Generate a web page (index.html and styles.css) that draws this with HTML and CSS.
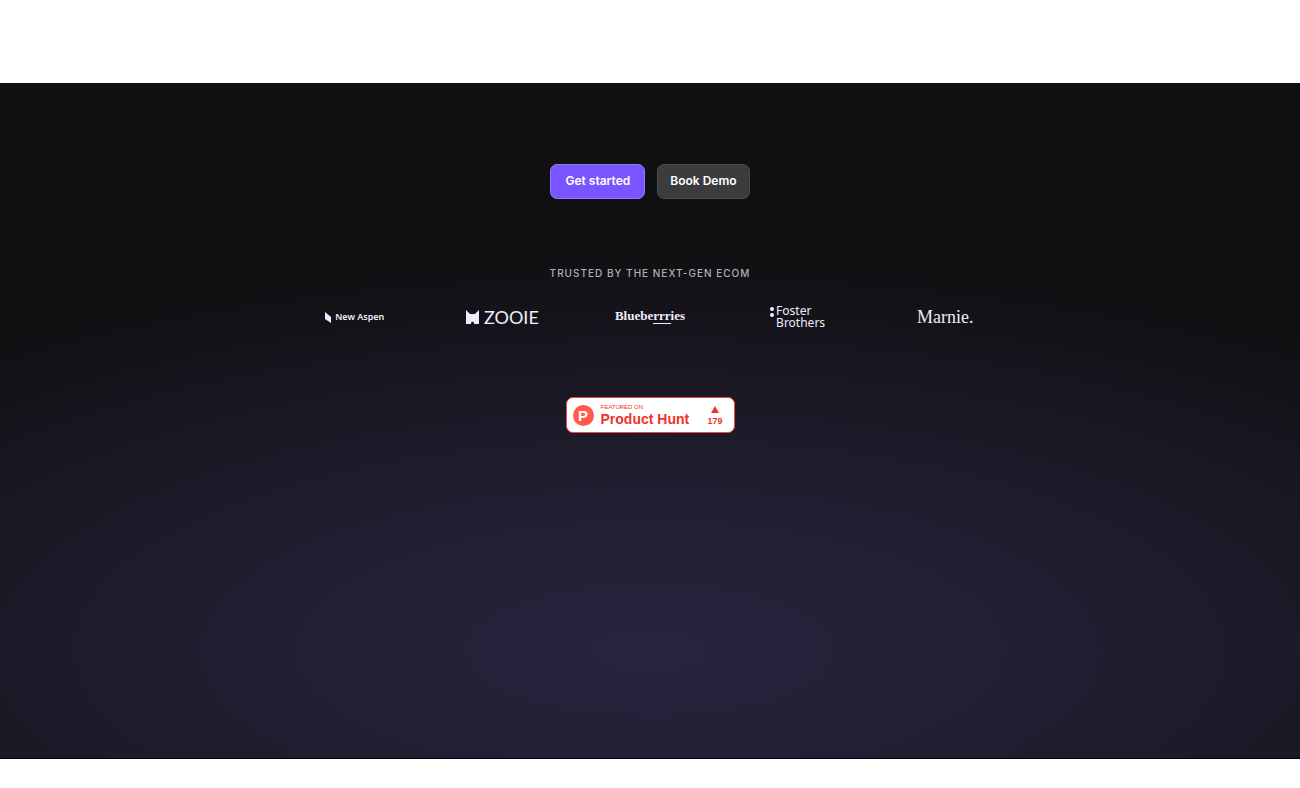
FILE: index.html
```
<!DOCTYPE html>
<html lang="en">
<head>
    <meta charset="UTF-8">
    <meta name="viewport" content="width=device-width, initial-scale=1.0">
    <title>Get started</title>
    <link rel="stylesheet" href="styles.css">
</head>
<body>
  <main class="hero">
    <div class="actions">
      <button type="button" class="btn btn-primary">Get started</button>
      <button type="button" class="btn btn-dark">Book Demo</button>
    </div>

    <h2 class="trusted">Trusted by the next-gen ecom</h2>

    <ul class="logos">
      <li class="logo aspen">
        <svg width="6" height="11" viewBox="0 0 6 11"><path d="M0 0L6 5V11L0 7Z" fill="currentColor"/></svg>
        <span>New Aspen</span>
      </li>
      <li class="logo zooie">
        <svg width="13" height="14" viewBox="0 0 13 14"><path d="M0 0L4 4H9L13 0V14H8V12.500Q6.500 11 5 12.500V14H0Z" fill="currentColor"/></svg>
        <span>ZOOIE</span>
      </li>
      <li class="logo blueberries"><span>Bluebe<span class="underlined">rrr</span>ies</span></li>
      <li class="logo foster">
        <svg width="4" height="13" viewBox="0 0 4 13"><circle cx="2" cy="4" r="2" fill="currentColor"/><circle cx="2" cy="10" r="2" fill="currentColor"/></svg>
        <span>Foster<br>Brothers</span>
      </li>
      <li class="logo marnie">Marnie.</li>
    </ul>

    <a href="#" class="product-hunt">
      <span class="ph-mark">P</span>
      <span class="ph-text">
        <span class="ph-small">FEATURED ON</span>
        <span class="ph-name">Product Hunt</span>
      </span>
      <span class="ph-votes">
        <svg width="8" height="7" viewBox="0 0 8 7"><path d="M4 0L8 7H0Z" fill="currentColor"/></svg>
        <span>179</span>
      </span>
    </a>
  </main>
</body>
</html>
```
FILE: styles.css
```
* {
    box-sizing: border-box;
}

body {
    margin: 0;
    padding: 83px 0 29px;
    background: #fff;
    font-family: Inter, "Liberation Sans", sans-serif;
}

.hero {
    display: flex;
    flex-direction: column;
    align-items: center;
    padding: 81px 20px 325px;
    border-bottom: 1px solid #000;
    background: radial-gradient(ellipse 1100px 400px at 50% 84%, #29233f 0%, #221e32 36%, #1a1824 66%, #100f11 100%);
}

.actions {
    display: flex;
    gap: 12px;
}

.btn {
    height: 35px;
    padding: 0 14px 2px;
    border-radius: 7px;
    color: #fff;
    font-family: inherit;
    font-size: 12px;
    font-weight: 600;
    cursor: pointer;
}

.btn-primary {
    border: 1px solid #957aff;
    background: #7855ff;
}

.btn-dark {
    padding: 0 12px 2px;
    border: 1px solid #4b4b4d;
    background: #3c3c3e;
}

.trusted {
    margin: 68px 0 0;
    color: #b3aeba;
    font-size: 10px;
    font-weight: 500;
    line-height: 12px;
    letter-spacing: 1px;
    text-transform: uppercase;
}

.logos {
    display: grid;
    grid-template-columns: repeat(5, 1fr);
    align-items: center;
    justify-items: center;
    width: 100%;
    max-width: 738px;
    height: 36px;
    margin: 20px 0 0;
    padding: 0;
    list-style: none;
    color: #f0edfa;
}

.logo {
    display: flex;
    align-items: center;
    white-space: nowrap;
}

.aspen {
    gap: 4px;
    font: 600 9px/12px "Noto Sans", sans-serif;
}

.zooie {
    gap: 5px;
    font: 400 18px/20px Lato, sans-serif;
}

.blueberries {
    padding-bottom: 2px;
    font: 700 13px/14px "Liberation Serif", serif;
}

.underlined {
    border-bottom: 1px solid currentColor;
}

.foster {
    align-items: flex-start;
    gap: 2px;
    font: 400 12px/12px "Noto Sans", sans-serif;
}

.marnie {
    font: 400 18px/20px "Liberation Serif", serif;
}

.product-hunt {
    display: flex;
    align-items: center;
    width: 169px;
    height: 36px;
    margin-top: 62px;
    padding: 1px 11px 0 6px;
    border: 1px solid #f0483e;
    border-radius: 7px;
    background: #fff;
    color: #f0322b;
    font-family: "Liberation Sans", Arial, sans-serif;
    font-weight: 700;
    text-decoration: none;
}

.ph-mark {
    width: 21px;
    height: 21px;
    margin-right: 7px;
    border-radius: 50%;
    background: #ff5a4b;
    color: #fff;
    font-size: 15px;
    line-height: 21px;
    text-align: center;
}

.ph-text {
    display: flex;
    flex-direction: column;
}

.ph-small {
    font-size: 6px;
    font-weight: 400;
    line-height: 7px;
}

.ph-name {
    font-size: 14px;
    line-height: 16px;
}

.ph-votes {
    display: flex;
    flex-direction: column;
    align-items: center;
    gap: 3px;
    margin-left: auto;
    font-size: 9px;
    line-height: 10px;
}
```
